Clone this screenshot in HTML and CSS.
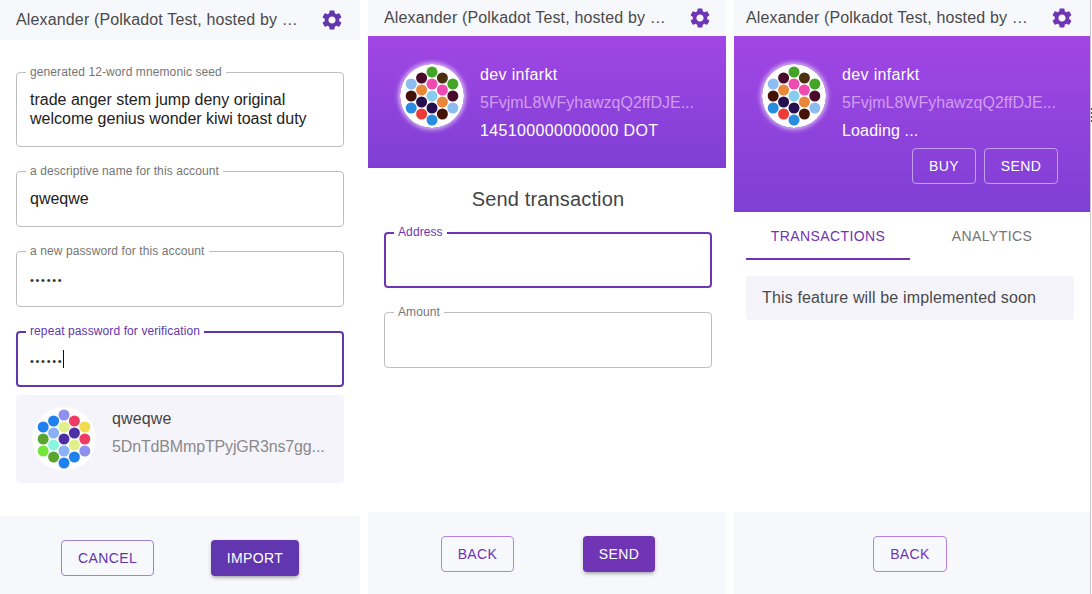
FILE: index.html
```html
<!DOCTYPE html>
<html lang="en">
  <head>
    <meta charset="UTF-8" />
    <title>Polkadot wallet screens</title>
    <link rel="stylesheet" href="styles.css">
  </head>
  <body>
    <svg class="icon-defs" width="0" height="0">
      <defs>
        <symbol id="gear" viewBox="0 0 24 24">
          <path d="M19.14 12.94c.04-.3.06-.61.06-.94 0-.32-.02-.64-.07-.94l2.03-1.58a.49.49 0 0 0 .12-.61l-1.92-3.32a.488.488 0 0 0-.59-.22l-2.39.96c-.5-.38-1.03-.7-1.62-.94l-.36-2.54a.484.484 0 0 0-.48-.41h-3.84c-.24 0-.43.17-.47.41l-.36 2.54c-.59.24-1.13.57-1.62.94l-2.39-.96c-.22-.08-.47 0-.59.22L2.74 8.87c-.12.21-.08.47.12.61l2.03 1.58c-.05.3-.09.63-.09.94s.02.64.07.94l-2.03 1.58a.49.49 0 0 0-.12.61l1.92 3.32c.12.22.37.29.59.22l2.39-.96c.5.38 1.03.7 1.62.94l.36 2.54c.05.24.24.41.48.41h3.84c.24 0 .44-.17.47-.41l.36-2.54c.59-.24 1.13-.56 1.62-.94l2.39.96c.22.08.47 0 .59-.22l1.92-3.32c.12-.22.07-.47-.12-.61l-2.01-1.58zM12 15.6c-1.98 0-3.6-1.62-3.6-3.6s1.62-3.6 3.6-3.6 3.6 1.62 3.6 3.6-1.62 3.6-3.6 3.6z" />
        </symbol>
        <symbol id="identicon-new" viewBox="-32 -32 64 64">
          <circle r="32" fill="#fff" />
          <circle cx="0" cy="-24" r="5.5" fill="#8f8ff0" />
          <circle cx="10.4" cy="-18" r="5.5" fill="#ee3d65" />
          <circle cx="20.8" cy="-12" r="5.5" fill="#f0dc4e" />
          <circle cx="20.8" cy="0" r="5.5" fill="#ee3d65" />
          <circle cx="20.8" cy="12" r="5.5" fill="#8f8ff0" />
          <circle cx="10.4" cy="18" r="5.5" fill="#2080ee" />
          <circle cx="0" cy="24" r="5.5" fill="#2080ee" />
          <circle cx="-10.4" cy="18" r="5.5" fill="#5aa52f" />
          <circle cx="-20.8" cy="12" r="5.5" fill="#74e63e" />
          <circle cx="-20.8" cy="0" r="5.5" fill="#5aa52f" />
          <circle cx="-20.8" cy="-12" r="5.5" fill="#2080ee" />
          <circle cx="-10.4" cy="-18" r="5.5" fill="#2080ee" />
          <circle cx="0" cy="-12" r="5.5" fill="#dff08a" />
          <circle cx="10.4" cy="-6" r="5.5" fill="#4e2ea5" />
          <circle cx="10.4" cy="6" r="5.5" fill="#dff08a" />
          <circle cx="0" cy="12" r="5.5" fill="#8ab0f5" />
          <circle cx="-10.4" cy="6" r="5.5" fill="#8af5e0" />
          <circle cx="-10.4" cy="-6" r="5.5" fill="#8ab0f5" />
          <circle cx="0" cy="0" r="5.5" fill="#4e2ea5" />
        </symbol>
        <symbol id="identicon-dev" viewBox="-32 -32 64 64">
          <circle r="32" fill="#fff" />
          <circle cx="0" cy="-24" r="5.5" fill="#44a428" />
          <circle cx="10.4" cy="-18" r="5.5" fill="#4a2f10" />
          <circle cx="20.8" cy="-12" r="5.5" fill="#44a428" />
          <circle cx="20.8" cy="0" r="5.5" fill="#4a0a2a" />
          <circle cx="20.8" cy="12" r="5.5" fill="#8cbcf0" />
          <circle cx="10.4" cy="18" r="5.5" fill="#451208" />
          <circle cx="0" cy="24" r="5.5" fill="#2a8ce0" />
          <circle cx="-10.4" cy="18" r="5.5" fill="#ee3a36" />
          <circle cx="-20.8" cy="12" r="5.5" fill="#2a8ce0" />
          <circle cx="-20.8" cy="0" r="5.5" fill="#451208" />
          <circle cx="-20.8" cy="-12" r="5.5" fill="#8cbcf0" />
          <circle cx="-10.4" cy="-18" r="5.5" fill="#4a0a2a" />
          <circle cx="0" cy="-12" r="5.5" fill="#ee4ab0" />
          <circle cx="10.4" cy="-6" r="5.5" fill="#ee4ab0" />
          <circle cx="10.4" cy="6" r="5.5" fill="#e8873a" />
          <circle cx="0" cy="12" r="5.5" fill="#26104f" />
          <circle cx="-10.4" cy="6" r="5.5" fill="#26104f" />
          <circle cx="-10.4" cy="-6" r="5.5" fill="#e8873a" />
          <circle cx="0" cy="0" r="5.5" fill="#88ccee" />
        </symbol>
      </defs>
    </svg>

    <div class="screens">
      <!-- Import account -->
      <section class="panel panel-import">
        <header class="top-bar top-bar-tall">
          <span class="network">Alexander (Polkadot Test, hosted by …</span>
          <svg class="gear"><use href="#gear" /></svg>
        </header>
        <div class="form form-import">
          <fieldset class="field field-seed">
            <legend>generated 12-word mnemonic seed</legend>
            <div class="field-value">trade anger stem jump deny original welcome genius wonder kiwi toast duty</div>
          </fieldset>
          <fieldset class="field">
            <legend>a descriptive name for this account</legend>
            <div class="field-value">qweqwe</div>
          </fieldset>
          <fieldset class="field">
            <legend>a new password for this account</legend>
            <div class="field-value"><span class="dots">••••••</span></div>
          </fieldset>
          <fieldset class="field field-focus">
            <legend>repeat password for verification</legend>
            <div class="field-value"><span class="dots">••••••</span><span class="caret"></span></div>
          </fieldset>
        </div>
        <div class="account-card">
          <svg class="identicon identicon-plain"><use href="#identicon-new" /></svg>
          <div class="account-text">
            <div class="account-name">qweqwe</div>
            <div class="account-address">5DnTdBMmpTPyjGR3ns7gg...</div>
          </div>
        </div>
        <footer class="actions actions-import">
          <button class="btn btn-outline btn-cancel">CANCEL</button>
          <button class="btn btn-solid btn-import">IMPORT</button>
        </footer>
      </section>

      <!-- Send transaction -->
      <section class="panel panel-send">
        <header class="top-bar">
          <span class="network">Alexander (Polkadot Test, hosted by …</span>
          <svg class="gear"><use href="#gear" /></svg>
        </header>
        <div class="hero hero-send">
          <svg class="identicon"><use href="#identicon-dev" /></svg>
          <div class="hero-text">
            <div class="hero-line hero-wide">dev infarkt</div>
            <div class="hero-line hero-address">5FvjmL8WFyhawzqQ2ffDJE...</div>
            <div class="hero-line hero-wide">145100000000000 DOT</div>
          </div>
        </div>
        <h2 class="send-title">Send transaction</h2>
        <div class="form form-send">
          <fieldset class="field field-focus">
            <legend>Address</legend>
            <div class="field-value"></div>
          </fieldset>
          <fieldset class="field">
            <legend>Amount</legend>
            <div class="field-value"></div>
          </fieldset>
        </div>
        <footer class="actions actions-send">
          <button class="btn btn-outline btn-back">BACK</button>
          <button class="btn btn-solid btn-send">SEND</button>
        </footer>
      </section>

      <!-- Account detail -->
      <section class="panel panel-detail">
        <header class="top-bar">
          <span class="network">Alexander (Polkadot Test, hosted by …</span>
          <svg class="gear"><use href="#gear" /></svg>
        </header>
        <div class="hero hero-detail">
          <svg class="identicon"><use href="#identicon-dev" /></svg>
          <div class="hero-text">
            <div class="hero-line hero-wide">dev infarkt</div>
            <div class="hero-line hero-address">5FvjmL8WFyhawzqQ2ffDJE...</div>
            <div class="hero-line">Loading ...</div>
            <div class="hero-buttons">
              <button class="btn btn-ghost btn-buy">BUY</button>
              <button class="btn btn-ghost btn-hero-send">SEND</button>
            </div>
          </div>
        </div>
        <div class="tabs">
          <div class="tab tab-active">TRANSACTIONS</div>
          <div class="tab">ANALYTICS</div>
        </div>
        <div class="notice">This feature will be implemented soon</div>
        <footer class="actions actions-detail">
          <button class="btn btn-outline btn-back">BACK</button>
        </footer>
      </section>

      <div class="window-edge"></div>
    </div>
  </body>
</html>
```

FILE: styles.css
```css
* {
  box-sizing: border-box;
}

body {
  margin: 0;
  background: #fff;
  font-family: "Liberation Sans", Arial, sans-serif;
  font-size: 16px;
  letter-spacing: 0.15px;
  color: #222;
  overflow: hidden;
}

.icon-defs {
  display: none;
}

.screens {
  display: flex;
  gap: 8px;
  height: 594px;
}

.panel {
  display: flex;
  flex-direction: column;
  height: 594px;
}

.panel-import {
  width: 360px;
  --accent: #6136ae;
  --accent-line: #a080d8;
}

.panel-send {
  width: 358px;
  --accent: #7035b5;
  --accent-line: #b084e0;
}

.panel-detail {
  width: 356px;
  --accent: #7035b5;
  --accent-line: #b084e0;
}

/* sliver of the next window */
.window-edge {
  width: 2px;
  margin-left: -8px;
  border-left: 1px solid #c8c8c8;
  background: repeating-linear-gradient(#555 0 2px, transparent 2px 4px) no-repeat 0 108px / 100% 16px;
}

.top-bar {
  display: flex;
  align-items: center;
  justify-content: space-between;
  height: 36px;
  padding: 0 16px;
  background: #f7f8fc;
  flex-shrink: 0;
}

.top-bar-tall {
  height: 40px;
}

.panel-detail .top-bar {
  padding-left: 12px;
}

.panel-send .gear {
  margin-right: -2px;
}

.network {
  white-space: nowrap;
  color: #4a4a4a;
}

.gear {
  width: 24px;
  height: 24px;
  fill: var(--accent);
}

/* form fields */
.form {
  display: flex;
  flex-direction: column;
  gap: 17px;
  padding: 0 16px;
}

.form-import {
  padding-top: 25px;
}

.form-send {
  padding: 14px 14px 0 16px;
}

.field {
  margin: 0;
  padding: 0 13px;
  height: 63px;
  border: 1px solid #bdbdbd;
  border-radius: 4px;
}

.field legend {
  padding: 0 4px;
  margin-left: -4px;
  font-size: 12px;
  line-height: 14px;
  letter-spacing: 0.1px;
  color: #757575;
}

.field-seed {
  height: 82px;
}

.field-value {
  padding-top: 11px;
  min-height: 30px;
  line-height: 19px;
  letter-spacing: 0;
  color: #222;
}

.dots {
  font-size: 11px;
  letter-spacing: 1.7px;
  color: #333;
}

.field-focus {
  height: 62px;
  margin-top: 1px;
  border: 2px solid var(--accent);
  padding: 0 12px;
}

.field-focus legend {
  color: var(--accent);
  transform: translateY(-1px);
}

.caret {
  display: inline-block;
  width: 1px;
  height: 18px;
  background: #111;
  vertical-align: text-bottom;
}

/* account card */
.account-card {
  display: flex;
  align-items: center;
  gap: 16px;
  height: 88px;
  margin: 8px 16px 0;
  padding: 0 16px;
  background: #f6f4fb;
  border-radius: 4px;
}

.identicon {
  width: 64px;
  height: 64px;
  flex-shrink: 0;
  border-radius: 50%;
  box-shadow: 0 0 5px 1px rgba(255, 255, 255, 0.8);
}

.identicon-plain {
  box-shadow: none;
}

.account-text {
  min-width: 0;
  flex: 1;
  margin-bottom: 14px;
}

.account-name {
  line-height: 19px;
  color: #444;
}

.account-address {
  margin-top: 9px;
  line-height: 19px;
  letter-spacing: -0.15px;
  white-space: nowrap;
  color: #8a8a8a;
}

/* purple header */
.hero {
  display: flex;
  gap: 16px;
  padding: 28px 32px 0;
  background: linear-gradient(180deg, #a146e4 0%, #7f3fd5 100%);
  flex-shrink: 0;
  color: #fff;
}

.hero-send {
  height: 132px;
}

.hero-detail {
  height: 176px;
  padding-left: 28px;
}

.hero-text {
  min-width: 0;
  flex: 1;
  padding-top: 1px;
}

.hero-line {
  height: 28px;
  line-height: 20px;
  white-space: nowrap;
}

.hero-wide {
  letter-spacing: 0.35px;
}

.hero-address {
  letter-spacing: 0;
  color: #d29cf0;
}

.hero-buttons {
  display: flex;
  justify-content: flex-end;
  gap: 8px;
  margin-top: -1px;
}

.send-title {
  margin: 20px 0 0;
  padding-left: 2px;
  font-size: 20px;
  font-weight: 400;
  line-height: 23px;
  text-align: center;
  color: #444;
}

/* buttons */
.btn {
  height: 36px;
  padding: 0;
  border-radius: 4px;
  font-family: inherit;
  font-size: 14px;
  font-weight: 400;
  letter-spacing: 0.4px;
}

.btn-outline {
  background: transparent;
  border: 1px solid var(--accent-line);
  color: var(--accent);
}

.btn-solid {
  background: var(--accent);
  border: 0;
  color: #fff;
  box-shadow: 0 3px 3px -2px rgba(0, 0, 0, 0.2), 0 2px 4px rgba(0, 0, 0, 0.2);
}

.btn-ghost {
  background: transparent;
  border: 1px solid rgba(255, 255, 255, 0.5);
  color: #fff;
}

.btn-cancel {
  width: 93px;
}

.btn-import {
  width: 88px;
}

.btn-back {
  width: 73px;
}

.actions-detail .btn-back {
  width: 74px;
}

.btn-send {
  width: 72px;
}

.btn-buy {
  width: 64px;
}

.btn-hero-send {
  width: 74px;
}

.actions {
  display: flex;
  justify-content: center;
  gap: 69px;
  height: 82px;
  margin-top: auto;
  padding-top: 24px;
  background: #f7f8fc;
}

.actions-import {
  gap: 57px;
  height: 78px;
}

.actions-send {
  padding-left: 2px;
}

.actions-detail {
  padding-right: 4px;
}

/* tabs */
.tabs {
  display: flex;
  margin: 0 16px 0 12px;
}

.tab {
  flex: 1;
  height: 48px;
  line-height: 48px;
  text-align: center;
  font-size: 14px;
  letter-spacing: 0.4px;
  color: #757575;
}

.tab-active {
  color: var(--accent);
  border-bottom: 2px solid var(--accent);
}

.notice {
  margin: 16px 16px 0 12px;
  padding: 0 16px;
  height: 44px;
  line-height: 44px;
  background: #f6f4fb;
  border-radius: 4px;
  color: #4a4a4a;
}
```
